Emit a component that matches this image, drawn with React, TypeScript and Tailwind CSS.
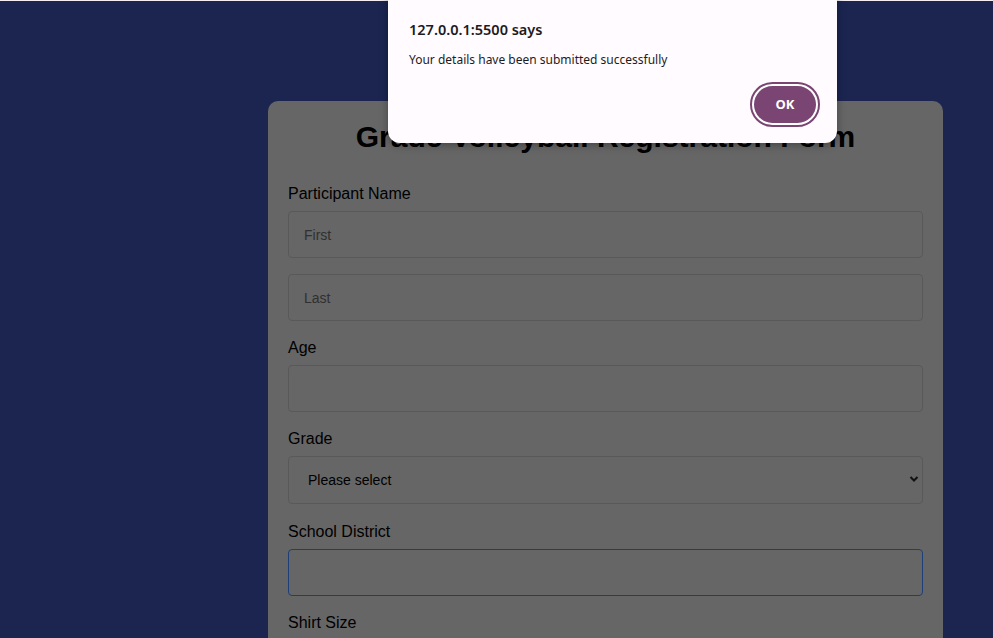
import React from "react";

const fieldInput =
  "block h-[47px] w-full rounded-[4px] border border-[#595959] bg-[#666666] pl-[15px] pr-4 text-[14px] text-black placeholder:text-[#303030] placeholder:opacity-100 outline-none";

function Label({ children }: { children: React.ReactNode }) {
  return <label className="mb-[8px] block h-[18px] text-[16px] leading-[18px] text-black">{children}</label>;
}

export default function App() {
  return (
    <div className="relative h-[638px] w-[993px] overflow-hidden bg-[#1b2550] font-['Liberation_Sans',Arial,sans-serif]">
      <div className="h-px w-full bg-[#f4eef3]" />

      <form className="ml-[268px] mt-[100px] w-[675px] rounded-[10px] bg-[#666666] px-5 pt-[20px] pb-10">
        <h1 className="mb-[32px] h-[32px] text-center text-[30px] font-bold leading-[32px] text-black">
          Grade Volleyball Registration Form
        </h1>

        <Label>Participant Name</Label>
        <input className={`${fieldInput} mb-4`} placeholder="First" />
        <input className={`${fieldInput} mb-[18px]`} placeholder="Last" />

        <Label>Age</Label>
        <input className={`${fieldInput} mb-[18px]`} />

        <Label>Grade</Label>
        <div className="relative mb-[19px]">
          <select className="block h-[48px] w-full appearance-none rounded-[4px] border border-[#595959] bg-[#666666] pl-[19px] text-[14px] text-black outline-none">
            <option>Please select</option>
          </select>
          <svg
            className="pointer-events-none absolute right-[4px] top-[19px]"
            width="10"
            height="8"
            viewBox="0 0 10 8"
          >
            <path d="M1.5 2 L5 5.5 L8.5 2" fill="none" stroke="#111" strokeWidth="2" />
          </svg>
        </div>

        <Label>School District</Label>
        <input className="mb-[18px] block h-[47px] w-full rounded-[4px] border border-[#1d3f78] bg-[#666666] px-4 text-[14px] outline-none" />

        <Label>Shirt Size</Label>
        <input className={`${fieldInput} mb-4`} />
      </form>

      {/* alert dialog */}
      <div className="absolute left-[388px] top-[-12px] h-[155px] w-[449px] rounded-[12px] bg-[#fffbfe] shadow-[0_2px_8px_rgba(0,0,0,0.35)] font-['Noto_Sans',sans-serif]">
        <div className="pl-[21px] pt-[31px]">
          <div className="text-[14.5px] font-semibold leading-[20px] text-[#1c1b1f]">127.0.0.1:5500 says</div>
          <div className="mt-[12px] text-[12px] leading-[17px] text-[#1c1b1f]">
            Your details have been submitted successfully
          </div>
        </div>
        <div className="absolute left-[362px] top-[94px] flex h-[45px] w-[70px] items-center justify-center rounded-full border-2 border-[#7a4573] bg-white p-[2px]">
          <button className="flex h-full w-full items-center justify-center rounded-full bg-[#7a4573] text-[13px] font-bold text-white">
            OK
          </button>
        </div>
      </div>
    </div>
  );
}
